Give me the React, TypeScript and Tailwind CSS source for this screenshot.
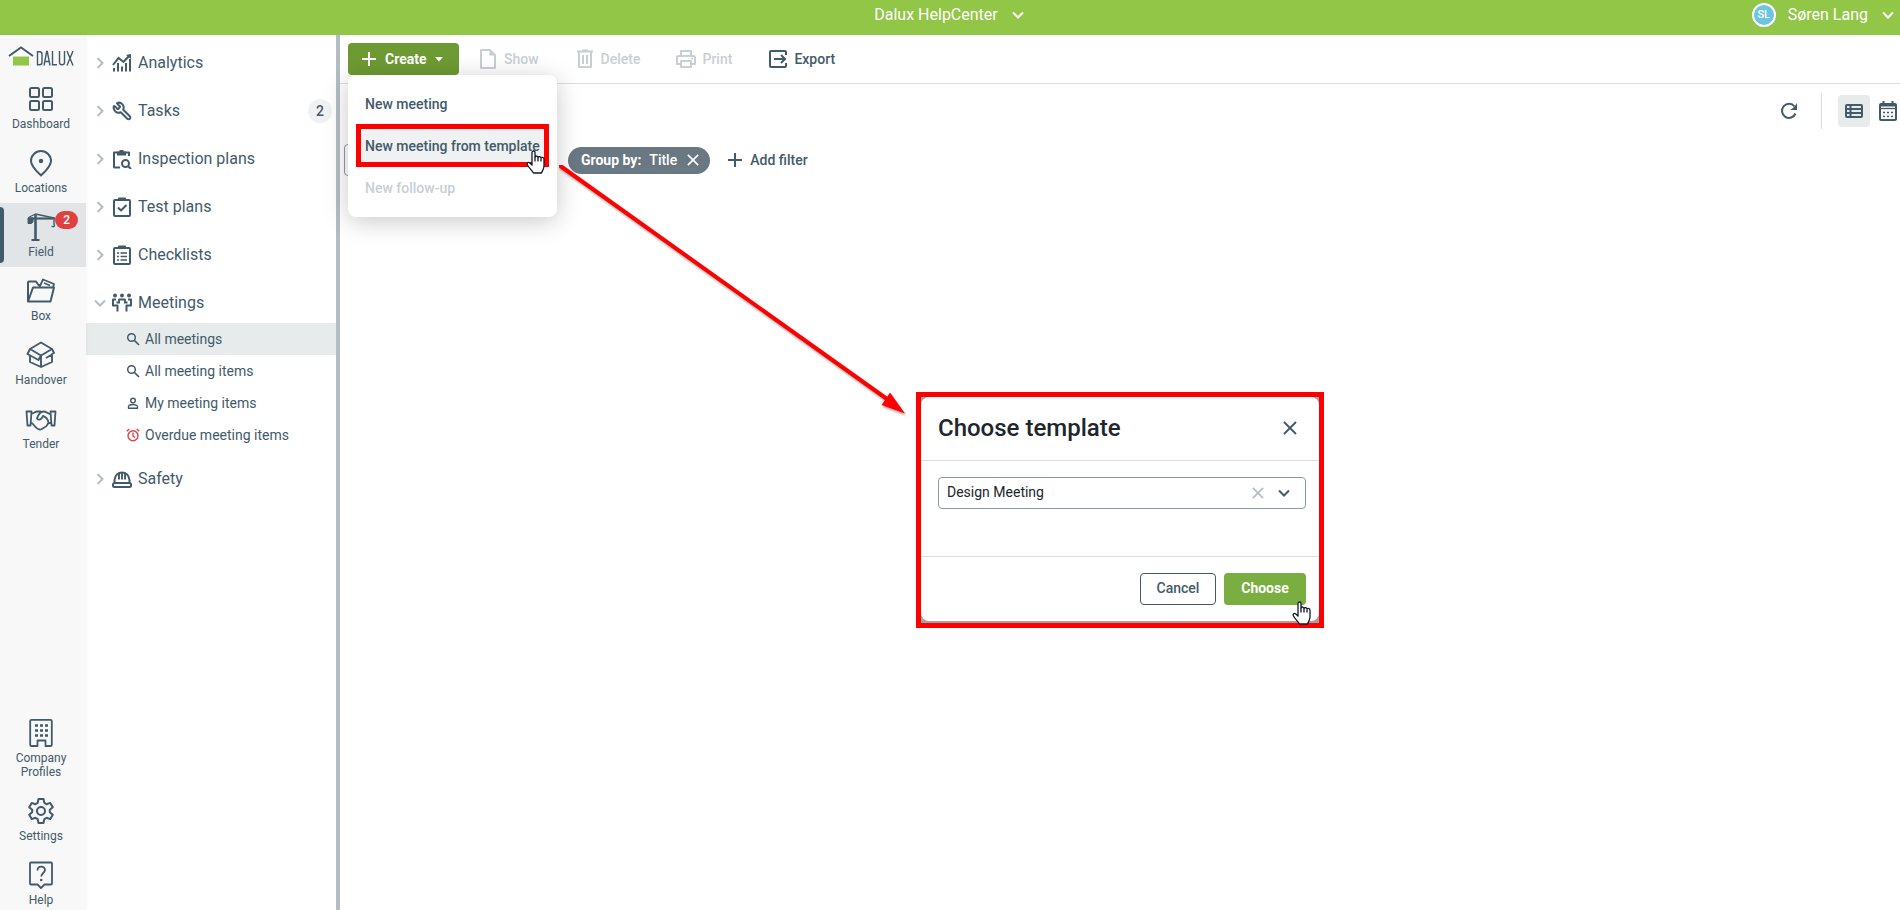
import React from 'react';
import clsx from 'clsx';
import { Wrench } from 'lucide-react';

interface IconProps {
  className?: string;
}

interface SvgProps extends IconProps {
  w: number;
  h: number;
  children: React.ReactNode;
}

function Svg({ w, h, className, children }: SvgProps) {
  return (
    <svg
      width={w}
      height={h}
      viewBox={`0 0 ${w} ${h}`}
      fill="none"
      stroke="currentColor"
      strokeWidth="2"
      strokeLinejoin="round"
      aria-hidden="true"
      className={clsx('shrink-0', className)}
    >
      {children}
    </svg>
  );
}

const DashboardIcon = () => (
  <Svg w={32} h={32}>
    <rect x="5" y="5" width="9" height="9" rx="1.5" />
    <rect x="18" y="5" width="9" height="9" rx="1.5" />
    <rect x="5" y="18" width="9" height="9" rx="1.5" />
    <rect x="18" y="18" width="9" height="9" rx="1.5" />
  </Svg>
);

const LocationIcon = () => (
  <Svg w={32} h={32}>
    <path d="M16 28.500C12.500 25 6 19.500 6 14a10 10 0 0 1 20 0c0 5.500-6.500 11-10 14.500Z" />
    <circle cx="16" cy="14" r="2.200" fill="currentColor" stroke="none" />
  </Svg>
);

const CraneIcon = () => (
  <Svg w={32} h={32}>
    <path d="M10.500 3.500v25.500" strokeWidth="2.600" />
    <path d="M6.500 29h8" strokeWidth="2" />
    <path d="M3 7.500h27" strokeWidth="2.200" />
    <path d="M3.500 6.500 10.500 3l18.500 4" strokeWidth="1.300" />
    <path d="M3 7h5v4l-1.500 1.500H3Z" fill="currentColor" strokeWidth="1" />
    <path d="M29 8.500v5c1.500 1.500-.5 3-2.500 1.500" strokeWidth="1.400" />
  </Svg>
);

const BoxIcon = () => (
  <Svg w={32} h={32}>
    <path d="M3 26V7.500Q3 6.500 4 6.500h7l2.500 3.500H15" />
    <path d="M3 26.500h22.500L29 12.500H8L3 26.500Z" />
    <path d="M14.500 12 18 4.500l11 4.500-1 3.500" strokeWidth="1.800" />
    <path d="m19 8 6 2.500" strokeWidth="1.400" />
  </Svg>
);

const HandoverIcon = () => (
  <Svg w={32} h={32}>
    <path d="m5 10 11-6.500L27 10l-11 6.500L5 10Z" strokeWidth="1.900" />
    <path d="M5 10 2.500 15l11 6 2.500-4.500" strokeWidth="1.900" />
    <path d="m27 10 2 4-2 1v8l-11 5-11-5v-6M16 17v11M21 19l6-3.500" strokeWidth="1.900" />
  </Svg>
);

const TenderIcon = () => (
  <Svg w={34} h={32}>
    <path d="M2.500 8.500h5l-1 14h-3ZM31.500 8.500h-5l1 14h3Z" strokeWidth="1.800" />
    <path d="M7.500 10.500c3 0 3-2 6-2h3.500M7 20c3 0 4 6 8.500 6.500 3.500.500 4-2 5.500-2.500 2-.5 2-2.500 3.500-4H27M26.500 11c-3-.5-4-2.500-7-2.500-4 0-5.500 4-6.500 7 1.500 2.500 5 .5 6-2.500 2.500.5 5.500 3.500 5.500 7" strokeWidth="1.800" />
  </Svg>
);

const CompanyIcon = () => (
  <Svg w={32} h={32}>
    <path d="M12.500 29H6.500Q5.200 29 5.200 27.700V4Q5.200 2.800 6.500 2.800h19Q26.800 2.800 26.800 4v23.700Q26.800 29 25.500 29h-5v-5.500h-8V29Z" strokeWidth="1.800" />
    <path d="M10 8.500h3M15 8.500h3M20 8.500h3M10 13.500h3M15 13.500h3M20 13.500h3M10 18.500h3M15 18.500h3M20 18.500h3" strokeWidth="2.600" />
  </Svg>
);

const SettingsIcon = () => (
  <Svg w={32} h={32}>
    <path d="M13.500 4h5l.8 3.800 2.300 1.400 3.700-1.300 2.500 4.300-3 2.500v2.600l3 2.500-2.500 4.300-3.700-1.300-2.300 1.400-.8 3.800h-5l-.8-3.800-2.300-1.400-3.700 1.300-2.500-4.300 3-2.500v-2.600l-3-2.500 2.500-4.300 3.700 1.300 2.300-1.400Z" />
    <circle cx="16" cy="16" r="4" />
  </Svg>
);

const HelpIcon = () => (
  <Svg w={32} h={32}>
    <path d="M6 3.500h20q1 0 1 1v20q0 1-1 1h-6.500L16 29l-3.500-3.500H6q-1 0-1-1v-20q0-1 1-1Z" strokeWidth="1.800" />
    <path d="M12.500 11.500c0-5 7.500-5 7.500-.5 0 3-3.800 3-3.800 6.500" strokeWidth="1.800" />
    <circle cx="16.200" cy="21" r="1.300" fill="currentColor" stroke="none" />
  </Svg>
);

const AnalyticsIcon = () => (
  <Svg w={20} h={20}>
    <path d="m1 12 5.500-7 5 4L17.500 2.500" strokeLinejoin="miter" />
    <path d="M14 2 19 1V6Z" fill="currentColor" stroke="none" />
    <path d="M2 18.500V15M6 18.500V10M10 18.500v-5M14 18.500V10M18 18.500V6" />
  </Svg>
);

const InspectionIcon = () => (
  <Svg w={20} h={20}>
    <path d="M8 18.500H2.500q-.5 0-.5-.5V3.500h15V7" />
    <path d="M5 2.500h9v4H5ZM7.500 1h4v3h-4Z" fill="currentColor" stroke="none" />
    <circle cx="13.500" cy="14.500" r="3.500" />
    <path d="m16 17 3 3" />
  </Svg>
);

const TestPlanIcon = () => (
  <Svg w={20} h={20}>
    <rect x="2" y="3" width="16" height="16" rx="1" />
    <path d="M7 3.500V1.500h6v2" />
    <path d="m6 10.500 3 3 5.500-5.500" />
  </Svg>
);

const ChecklistIcon = () => (
  <Svg w={20} h={20}>
    <rect x="2" y="3" width="16" height="16" rx="1" />
    <path d="M7 3.500V1.500h6v2" />
    <path d="M5 8h2M5 11.500h2M5 15h2M8.500 8H15M8.500 11.500H15M8.500 15H15" strokeWidth="1.600" />
  </Svg>
);

const MeetingsIcon = () => (
  <Svg w={20} h={20}>
    <g fill="currentColor" stroke="none">
      <circle cx="3" cy="2.500" r="2" />
      <circle cx="10" cy="2.500" r="2" />
      <circle cx="17" cy="2.500" r="2" />
    </g>
    <path d="M4 6.500H1v6h4.500V18.500M16 6.500h3v6h-4.500V18.500" />
    <path d="M4.500 9.500H8M12 9.500h3.500M7 9V6.500h6V9" strokeWidth="1.800" />
  </Svg>
);

const HelmetIcon = () => (
  <Svg w={20} h={20}>
    <path d="M2.500 13.500V11C3 6.500 6 3.500 10 3.500s7 3 7.500 7.500v2.500" />
    <path d="M7 4.500v6M10 3v7.500M13 4.500v6" strokeWidth="1.900" />
    <rect x="1" y="14" width="18" height="4" rx="1.500" />
  </Svg>
);

const SearchIcon = () => (
  <Svg w={14} h={14}>
    <circle cx="5.500" cy="5.500" r="3.800" strokeWidth="1.500" />
    <path d="m8.500 8.500 4.500 4.500" strokeWidth="1.700" />
  </Svg>
);

const PersonIcon = () => (
  <Svg w={14} h={14}>
    <circle cx="7" cy="4.500" r="2.300" strokeWidth="1.400" />
    <path d="M2.500 12.200v-1.400c0-3 9-3 9 0v1.400Z" strokeWidth="1.400" />
  </Svg>
);

const AlarmIcon = () => (
  <Svg w={14} h={14} className="text-[#e0403f]">
    <circle cx="7" cy="7.700" r="5" strokeWidth="1.400" />
    <path d="M7 4.500V8l2 1.500M.7 3.200 3.300 1M13.300 3.200 10.700 1" strokeWidth="1.300" />
  </Svg>
);

const Chevron = ({ className }: IconProps) => (
  <Svg w={12} h={12} className={className}>
    <path d="m1 3.500 5 5 5-5" strokeLinejoin="miter" />
  </Svg>
);

const PlusIcon = () => (
  <Svg w={16} h={16}>
    <path d="M8 1v14M1 8h14" />
  </Svg>
);

const CrossIcon = ({ className }: IconProps) => (
  <svg viewBox="0 0 14 14" fill="none" stroke="currentColor" strokeWidth="1.900" aria-hidden="true" className={className}>
    <path d="m1 1 12 12M13 1 1 13" />
  </svg>
);

const PageIcon = () => (
  <Svg w={16} h={20}>
    <path d="M1 1h9l5 5v13H1Z" />
    <path d="M10 1v5h5Z" fill="currentColor" strokeWidth="1" />
  </Svg>
);

const TrashIcon = () => (
  <Svg w={16} h={20}>
    <path d="M0 2.500h16M5 1.500h6M2 3v15h12V3M6 6v9M10 6v9" />
  </Svg>
);

const PrintIcon = () => (
  <Svg w={20} h={20}>
    <path d="M5 7V2h10v5M5 15H1V8.500Q1 7 2.500 7h15Q19 7 19 8.500V15h-4" />
    <rect x="5" y="12" width="10" height="6" />
    <path d="M15 9.500h2" strokeWidth="1.500" />
  </Svg>
);

const ExportIcon = () => (
  <Svg w={20} h={20}>
    <path d="M18 6V3q0-1-1-1H3Q2 2 2 3v14q0 1 1 1h14q1 0 1-1v-3" />
    <path d="M6 10h11M13 6l4 4-4 4" strokeLinejoin="miter" />
  </Svg>
);

const RefreshIcon = () => (
  <Svg w={20} h={20}>
    <path d="M16.500 12.500A7 7 0 1 1 15.500 5.500" />
    <path d="M18 2v7h-7l3-2 2-2Z" fill="currentColor" stroke="none" />
  </Svg>
);

const ListIcon = () => (
  <Svg w={20} h={16}>
    <rect x="2" y="2" width="16" height="12" rx="1" />
    <path d="M2 6h16M2 10h16M6.500 2v12" />
  </Svg>
);

const CalendarIcon = () => (
  <Svg w={20} h={20}>
    <rect x="2" y="3" width="16" height="16" rx="1" />
    <path d="M2 4.500h16M5.500 0v3M14.500 0v3" />
    <path d="M2 7.500h16" strokeWidth="1.300" />
    <path d="M5 11.500h2M9 11.500h2M13 11.500h2M5 15.500h2M9 15.500h2M13 15.500h2" strokeWidth="1.600" />
  </Svg>
);

const HandCursor = ({ className }: IconProps) => (
  <svg width="19" height="24" viewBox="0 0 19 24" fill="#fff" stroke="#111827" strokeWidth="1.300" strokeLinejoin="round" aria-hidden="true" className={className}>
    <path d="M6 13V2.500C6 .5 9 .5 9 2.500V7c.5-1.500 3-1.200 3 .5C12.500 6 15 6.500 15 8c1-1.200 3-.5 3 1.200V16c0 3-1.500 4.500-2.500 7h-8C6 20.500 3 18 1.500 15c-1-2 .5-3.200 2-2.200L6 15Z" />
    <path d="M9 7v4.500M12 7.500v4M15 8.500v3" fill="none" />
  </svg>
);

const Logo = () => (
  <svg width="66" height="22" viewBox="0 0 66 22" role="img" aria-label="Dalux">
    <path d="M5 9 13 2.500 21 9v10H5Z" fill="#fff" />
    <path d="M5 10.500h16V19.500H5Z" fill="#92c647" />
    <path d="M1 10 13 1.500l12 8.500" fill="none" stroke="#435a69" strokeWidth="2" />
    <g fill="none" stroke="#435a69" strokeWidth="1.400">
      <path d="M29.500 5.700v13.100h2q2.500 0 2.500-2.500v-8q0-2.600-2.500-2.600Z" />
      <path d="m36 19.500 2.700-14h.6l2.700 14M37 15.500h4" />
      <path d="M44.500 5v13.800H49" />
      <path d="M51.500 5v11.500q0 2.300 2.500 2.300t2.500-2.300V5" />
      <path d="m59 5 6 14.500M65 5l-6 14.500" />
    </g>
  </svg>
);

interface RailItemProps {
  icon: React.ReactNode;
  label: string;
  active?: boolean;
  badge?: number;
}

function RailItem({ icon, label, active, badge }: RailItemProps) {
  return (
    <a
      href="#"
      className={clsx('relative flex flex-col items-center py-2 pr-3 pl-2', active && 'bg-[#e1e5e8]')}
    >
      {active && <span className="absolute top-1 bottom-1 left-0 w-1 rounded-r-sm bg-[#435a69]" />}
      {icon}
      <span className="pt-0.5 text-center text-[12px] leading-[14px]">{label}</span>
      {badge && (
        <span className="absolute top-2 right-2 rounded-full bg-[#e0403f] px-2 text-[12px] leading-[18px] font-medium text-white">
          {badge}
        </span>
      )}
    </a>
  );
}

const topItems: RailItemProps[] = [
  { icon: <DashboardIcon />, label: 'Dashboard' },
  { icon: <LocationIcon />, label: 'Locations' },
  { icon: <CraneIcon />, label: 'Field', active: true, badge: 2 },
  { icon: <BoxIcon />, label: 'Box' },
  { icon: <HandoverIcon />, label: 'Handover' },
  { icon: <TenderIcon />, label: 'Tender' },
];

const bottomItems: RailItemProps[] = [
  { icon: <CompanyIcon />, label: 'Company Profiles' },
  { icon: <SettingsIcon />, label: 'Settings' },
  { icon: <HelpIcon />, label: 'Help' },
];

const modules = [
  { icon: <AnalyticsIcon />, label: 'Analytics' },
  { icon: <Wrench size={20} strokeWidth={2.4} className="-scale-x-100" />, label: 'Tasks', count: 2 },
  { icon: <InspectionIcon />, label: 'Inspection plans' },
  { icon: <TestPlanIcon />, label: 'Test plans' },
  { icon: <ChecklistIcon />, label: 'Checklists' },
  {
    icon: <MeetingsIcon />,
    label: 'Meetings',
    children: [
      { icon: <SearchIcon />, label: 'All meetings', active: true },
      { icon: <SearchIcon />, label: 'All meeting items' },
      { icon: <PersonIcon />, label: 'My meeting items' },
      { icon: <AlarmIcon />, label: 'Overdue meeting items' },
    ],
  },
  { icon: <HelmetIcon />, label: 'Safety' },
];

function Sidebar() {
  return (
    <nav aria-label="Modules" className="w-[254px] shrink-0 border-r-4 border-[#b2bdc4] bg-white pt-2">
      <ul className="flex flex-col gap-2">
        {modules.map((m) => (
          <li key={m.label}>
            <button className="flex h-10 w-full items-center gap-[6px] pr-1 pl-2 text-[16px]">
              <Chevron className={clsx('text-[#b2bdc4]', !m.children && '-rotate-90')} />
              {m.icon}
              {m.label}
              {m.count && (
                <span className="ml-auto size-6 rounded-full bg-[#eff1f2] text-center text-[14px] leading-6 font-medium">
                  {m.count}
                </span>
              )}
            </button>
            {m.children && (
              <ul>
                {m.children.map((c) => (
                  <li key={c.label}>
                    <a
                      href="#"
                      className={clsx('flex h-8 items-center gap-[5px] pl-10 text-[14px]', c.active && 'bg-[#e7ebec]')}
                    >
                      {c.icon}
                      {c.label}
                    </a>
                  </li>
                ))}
              </ul>
            )}
          </li>
        ))}
      </ul>
    </nav>
  );
}

function CreateMenu() {
  return (
    <div className="absolute top-full left-0 z-10 flex w-[209px] flex-col rounded-lg bg-white py-2 text-[14px] font-medium shadow-[0_4px_24px_rgba(0,0,0,0.22)]">
      <button className="h-[42px] pl-[17px] text-left">New meeting</button>
      <div className="relative">
        <button className="h-[42px] w-full bg-[#eff1f2] bg-clip-content px-2 text-left">
          <span className="flex h-full items-center pl-[9px] whitespace-nowrap">New meeting from template</span>
        </button>
        <div className="absolute inset-x-2 -top-px bottom-0 border-5 border-[#fe0000]" />
        <HandCursor className="absolute right-3 -bottom-[7px]" />
      </div>
      <button disabled className="h-[42px] pl-[17px] text-left text-[#c8cfd3]">
        New follow-up
      </button>
    </div>
  );
}

function Toolbar() {
  return (
    <div className="flex h-[49px] items-center border-b border-[#dadddf] pr-4 pl-2 text-[14px] font-medium">
      <div className="relative">
        <button className="flex h-8 w-[111px] items-center rounded bg-[#6e9a33] pl-[13px] text-white">
          <PlusIcon />
          <span className="ml-2 font-bold">Create</span>
          <svg width="8" height="5" viewBox="0 0 8 5" className="ml-2" aria-hidden="true">
            <path d="M0 0h8L4 4.500Z" fill="#fff" />
          </svg>
        </button>
        <CreateMenu />
      </div>
      <button disabled className="ml-[21px] flex items-center gap-2 text-[#c8cfd3]">
        <PageIcon />
        Show
      </button>
      <button disabled className="ml-[38px] flex items-center gap-2 text-[#c8cfd3]">
        <TrashIcon />
        Delete
      </button>
      <button disabled className="ml-9 flex items-center gap-[6px] text-[#c8cfd3]">
        <PrintIcon />
        Print
      </button>
      <button className="ml-9 flex items-center gap-[6px]">
        <ExportIcon />
        Export
      </button>
    </div>
  );
}

function ChooseTemplate() {
  return (
    <div className="absolute top-[357px] left-1/2 w-[408px] -translate-x-1/2 border-5 border-[#fe0000] bg-[#a3a3a3] pb-0.5">
      <div role="dialog" aria-labelledby="dialog-title" className="rounded-lg bg-white">
        <div className="flex h-16 items-center justify-between border-b border-[#d8dee1] px-[17px] pb-0.5">
          <h2 id="dialog-title" className="text-[24px] font-medium text-[#1c262c]">
            Choose template
          </h2>
          <button aria-label="Close" className="mr-[5px]">
            <CrossIcon className="size-[14px]" />
          </button>
        </div>
        <div className="h-24 border-b border-[#d8dee1] pt-4 pr-[13px] pl-[17px]">
          <div className="relative">
            <select
              aria-label="Template"
              className="h-8 w-full appearance-none rounded border border-[#8b9ba5] bg-white px-2 pb-0.5 text-[14px] text-[#1c262c]"
            >
              <option>Design Meeting</option>
            </select>
            <div className="absolute inset-y-0 right-4 flex items-center gap-[14px]">
              <button aria-label="Clear" className="text-[#b2bdc4]">
                <CrossIcon className="size-3" />
              </button>
              <Chevron className="pointer-events-none" />
            </div>
          </div>
        </div>
        <div className="flex justify-end gap-2 pt-4 pr-[13px] pb-4 text-[14px]">
          <button className="h-8 w-[76px] rounded border border-[#435a69] pb-0.5 font-medium">Cancel</button>
          <button className="h-8 w-[82px] rounded bg-[#7aae40] pb-0.5 font-bold text-white">Choose</button>
        </div>
      </div>
      <HandCursor className="absolute right-2 -bottom-0.5" />
    </div>
  );
}

export default function App() {
  return (
    <div className="flex h-screen flex-col overflow-hidden bg-white font-[Roboto,sans-serif] text-[#435a69]">
      <header className="relative flex h-[35px] shrink-0 items-start justify-center bg-[#92c647] pt-[3px] text-[16px] leading-6 text-white">
        <button className="flex items-center gap-[14px] pr-0.5">
          Dalux HelpCenter
          <Chevron />
        </button>
        <button className="absolute top-[3px] right-[6px] flex items-center">
          <span className="mr-3 size-6 rounded-full border-2 border-white bg-[#6dc6dc] text-center text-[11px] leading-5 font-medium">
            SL
          </span>
          Søren Lang
          <Chevron className="ml-[14px]" />
        </button>
      </header>

      <div className="flex min-h-0 flex-1">
        <aside className="z-10 flex w-[86px] shrink-0 flex-col bg-[#f8f8f8] shadow-[0_0_5px_rgba(0,0,0,0.06)]">
          <a href="#" className="block h-10 pt-[11px] pl-2">
            <Logo />
          </a>
          <nav aria-label="Products" className="flex flex-col">
            {topItems.map((item) => (
              <RailItem key={item.label} {...item} />
            ))}
          </nav>
          <nav aria-label="General" className="mt-auto -mb-[5px] flex flex-col">
            {bottomItems.map((item) => (
              <RailItem key={item.label} {...item} />
            ))}
          </nav>
        </aside>

        <Sidebar />

        <main className="relative min-w-0 flex-1">
          <Toolbar />
          <div className="flex h-[54px] items-center justify-end pr-[2px]">
            <button aria-label="Refresh" className="mr-[22px]">
              <RefreshIcon />
            </button>
            <span className="h-9 w-px bg-[#dadddf]" />
            <button aria-label="List view" className="mr-2 ml-4 flex size-8 items-center justify-center rounded bg-[#e7ebec]">
              <ListIcon />
            </button>
            <button aria-label="Calendar view">
              <CalendarIcon />
            </button>
          </div>
          <div className="flex h-11 items-center pl-1 text-[14px]">
            <button aria-label="Search" className="h-8 w-10 rounded border border-[#8b9ba5]" />
            <div className="ml-[184px] flex h-[27px] items-center rounded-full bg-[#697883] pr-[11px] pl-[13px] text-white">
              <span className="font-bold">Group by:</span>
              <span className="ml-2 font-medium">Title</span>
              <button aria-label="Remove grouping" className="ml-[10px]">
                <CrossIcon className="size-3" />
              </button>
            </div>
            <button className="ml-[17px] flex items-center gap-[7px] font-medium">
              <PlusIcon />
              Add filter
            </button>
          </div>

          <svg
            width="350"
            height="255"
            viewBox="0 0 350 255"
            aria-hidden="true"
            className="pointer-events-none absolute top-[130px] left-[219px] z-20"
          >
            <g fill="#fe0000" className="drop-shadow-[1px_2px_1px_rgba(0,0,0,0.35)]">
              <path d="M0 0 328 234" stroke="#fe0000" strokeWidth="4" />
              <path d="M331 227.500 346 248.500 322.500 240Z" />
            </g>
          </svg>

          <ChooseTemplate />
        </main>
      </div>
    </div>
  );
}
